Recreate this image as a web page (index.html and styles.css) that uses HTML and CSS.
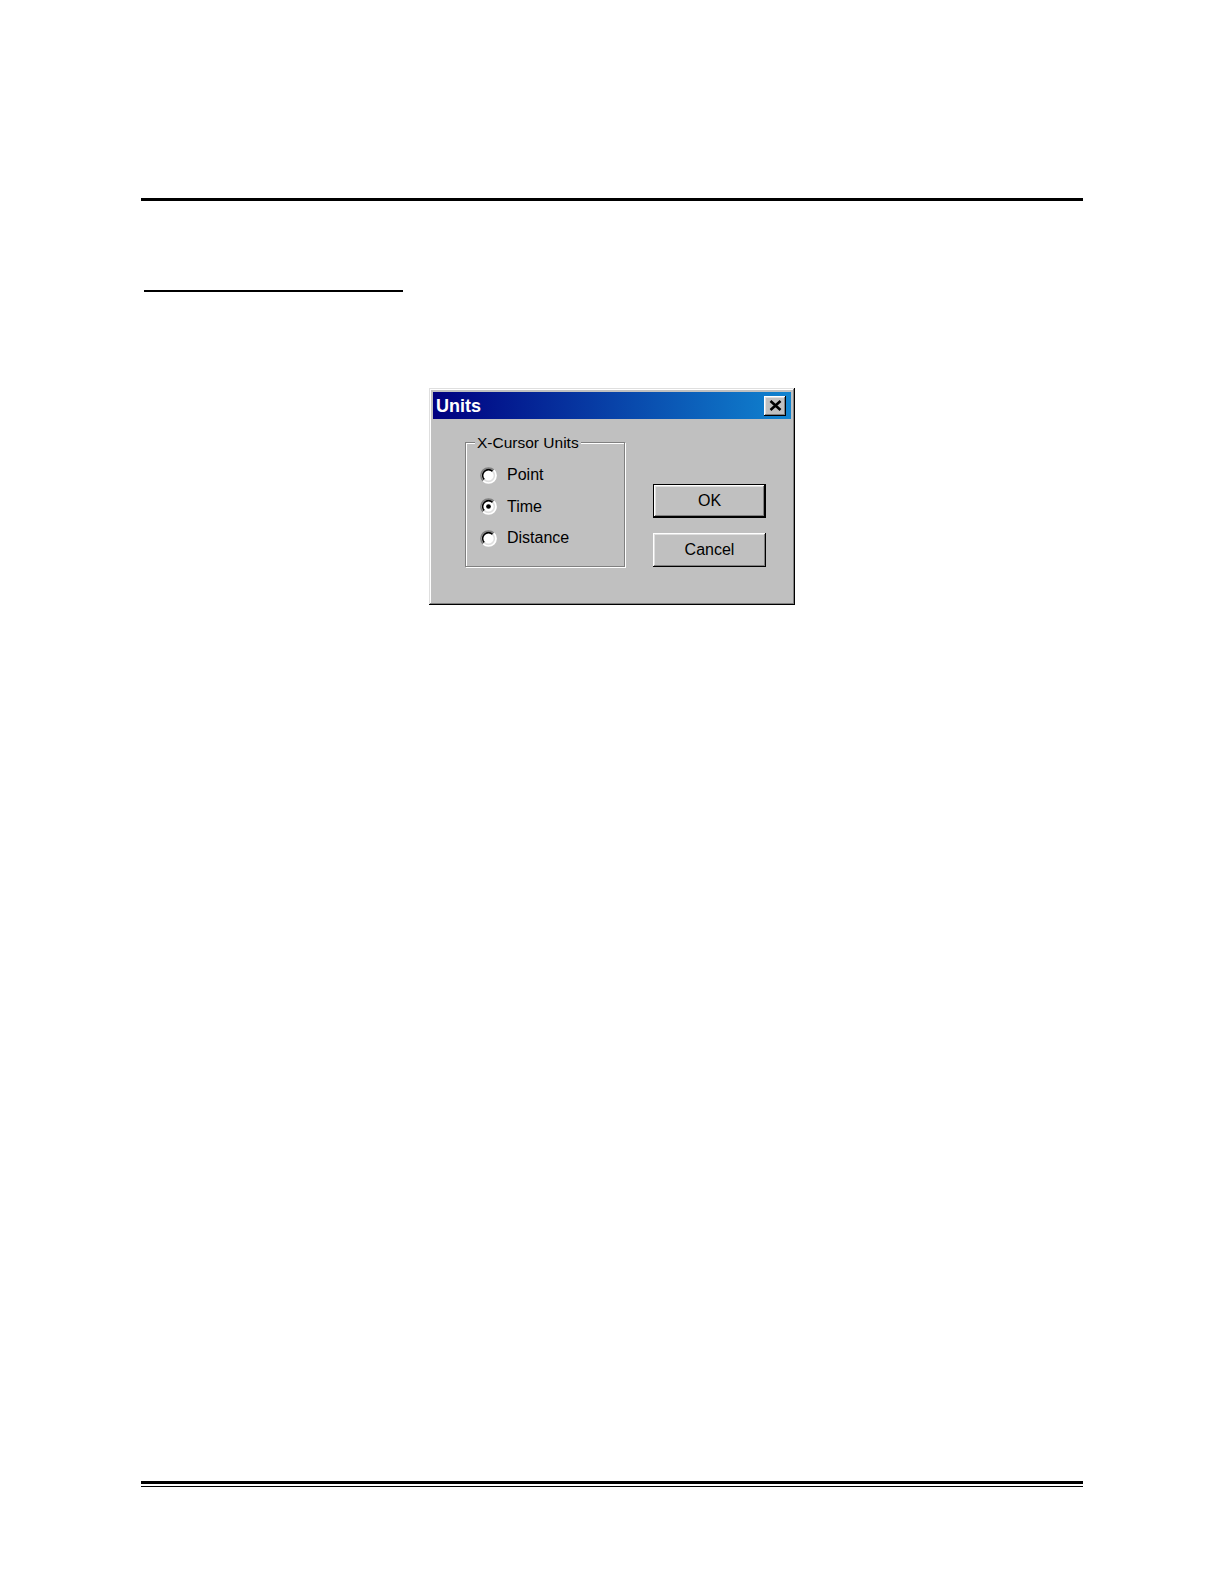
FILE: index.html
```html
<!DOCTYPE html>
<html>
<head>
<meta charset="utf-8">
<link rel="stylesheet" href="styles.css">
</head>
<body>
<div class="page">
  <div class="rule-top"></div>
  <div class="sub-rule"></div>
  <div class="dialog">
    <div class="titlebar">
      <span class="title">Units</span>
      <span class="close">
        <svg width="13" height="11" viewBox="0 0 13 11"><path d="M1.5 1 L11.5 10 M11.5 1 L1.5 10" stroke="#000" stroke-width="2.6" fill="none"/></svg>
      </span>
    </div>
    <div class="body">
      <div class="group">
        <span class="legend">X-Cursor Units</span>
        <div class="radio-row">
          <svg class="radio" width="17" height="17" viewBox="0 0 18 18"><circle cx="9" cy="9" r="8" fill="#fff"/><path d="M3.3 14.7 A8 8 0 0 1 14.7 3.3" stroke="#808080" stroke-width="1.6" fill="none"/><path d="M4.6 13.4 A6.2 6.2 0 0 1 13.4 4.6" stroke="#000" stroke-width="1.6" fill="none"/><path d="M14.7 3.3 A8 8 0 0 1 3.3 14.7" stroke="#fff" stroke-width="1.6" fill="none"/><path d="M13.4 4.6 A6.2 6.2 0 0 1 4.6 13.4" stroke="#dfdfdf" stroke-width="1.6" fill="none"/></svg>
          <span>Point</span>
        </div>
        <div class="radio-row">
          <svg class="radio" width="17" height="17" viewBox="0 0 18 18"><circle cx="9" cy="9" r="8" fill="#fff"/><path d="M3.3 14.7 A8 8 0 0 1 14.7 3.3" stroke="#808080" stroke-width="1.6" fill="none"/><path d="M4.6 13.4 A6.2 6.2 0 0 1 13.4 4.6" stroke="#000" stroke-width="1.6" fill="none"/><path d="M14.7 3.3 A8 8 0 0 1 3.3 14.7" stroke="#fff" stroke-width="1.6" fill="none"/><path d="M13.4 4.6 A6.2 6.2 0 0 1 4.6 13.4" stroke="#dfdfdf" stroke-width="1.6" fill="none"/><circle cx="9" cy="9" r="2.5" fill="#000"/></svg>
          <span>Time</span>
        </div>
        <div class="radio-row">
          <svg class="radio" width="17" height="17" viewBox="0 0 18 18"><circle cx="9" cy="9" r="8" fill="#fff"/><path d="M3.3 14.7 A8 8 0 0 1 14.7 3.3" stroke="#808080" stroke-width="1.6" fill="none"/><path d="M4.6 13.4 A6.2 6.2 0 0 1 13.4 4.6" stroke="#000" stroke-width="1.6" fill="none"/><path d="M14.7 3.3 A8 8 0 0 1 3.3 14.7" stroke="#fff" stroke-width="1.6" fill="none"/><path d="M13.4 4.6 A6.2 6.2 0 0 1 4.6 13.4" stroke="#dfdfdf" stroke-width="1.6" fill="none"/></svg>
          <span>Distance</span>
        </div>
      </div>
      <div class="buttons">
        <div class="btn btn-default">OK</div>
        <div class="btn">Cancel</div>
      </div>
    </div>
  </div>
  <div class="footer">
    <div class="rule-thick"></div>
    <div class="rule-thin"></div>
  </div>
</div>
</body>
</html>
```
FILE: styles.css
```css
html, body {
  margin: 0;
  padding: 0;
  background: #fff;
}
.page {
  width: 1224px;
  height: 1584px;
  box-sizing: border-box;
  padding: 198px 0 0 141px;
  font-family: "Liberation Sans", Arial, sans-serif;
}
.rule-top {
  width: 942px;
  height: 3px;
  background: #000;
}
.sub-rule {
  margin-top: 89px;
  margin-left: 3px;
  width: 259px;
  height: 2px;
  background: #000;
}
.dialog {
  margin-top: 96px;
  margin-left: 288px;
  width: 366px;
  height: 217px;
  box-sizing: border-box;
  background: #c0c0c0;
  padding: 4px;
  box-shadow: inset -1px -1px 0 #000, inset 1px 1px 0 #dfdfdf, inset -2px -2px 0 #808080, inset 2px 2px 0 #fff, inset -3px -3px 0 #c0c0c0;
  display: flex;
  flex-direction: column;
}
.titlebar {
  height: 27px;
  background: linear-gradient(to right, #000080, #1084d0);
  display: flex;
  align-items: center;
  justify-content: space-between;
  padding: 0 5px 0 3px;
}
.title {
  color: #fff;
  font-weight: bold;
  font-size: 18px;
  line-height: 20px;
  margin-top: 1px;
}
.close {
  width: 22px;
  height: 20px;
  box-sizing: border-box;
  background: #c0c0c0;
  display: flex;
  align-items: center;
  justify-content: center;
  box-shadow: inset -1px -1px 0 #000, inset 1px 1px 0 #fff, inset -2px -2px 0 #808080, inset 2px 2px 0 #dfdfdf;
}
.body {
  display: flex;
  padding: 23px 0 0 32px;
}
.group {
  position: relative;
  width: 160px;
  height: 125px;
  box-sizing: border-box;
  border: 1px solid #808080;
  box-shadow: 1px 1px 0 #fff, inset 1px 1px 0 #fff;
  padding: 23px 0 0 14px;
  display: flex;
  flex-direction: column;
  gap: 13.5px;
}
.legend {
  position: absolute;
  top: -9px;
  left: 9px;
  background: #c0c0c0;
  padding: 0 2px;
  font-size: 15.5px;
  line-height: 18px;
  color: #000;
}
.radio-row {
  display: flex;
  align-items: center;
  gap: 10px;
  height: 18px;
  font-size: 16px;
  line-height: 18px;
  color: #000;
}
.radio {
  display: block;
}
.buttons {
  display: flex;
  flex-direction: column;
  gap: 15px;
  margin-left: 28px;
  padding-top: 42px;
}
.btn {
  width: 113px;
  height: 34px;
  box-sizing: border-box;
  display: flex;
  align-items: center;
  justify-content: center;
  font-size: 16px;
  color: #000;
  background: #c0c0c0;
  box-shadow: inset -1px -1px 0 #000, inset 1px 1px 0 #fff, inset -2px -2px 0 #808080, inset 2px 2px 0 #dfdfdf;
}
.btn-default {
  border: 1px solid #000;
}
.footer {
  margin-top: 876px;
  width: 942px;
}
.rule-thick {
  height: 3px;
  background: #000;
}
.rule-thin {
  margin-top: 2px;
  height: 1px;
  background: #000;
}
```
